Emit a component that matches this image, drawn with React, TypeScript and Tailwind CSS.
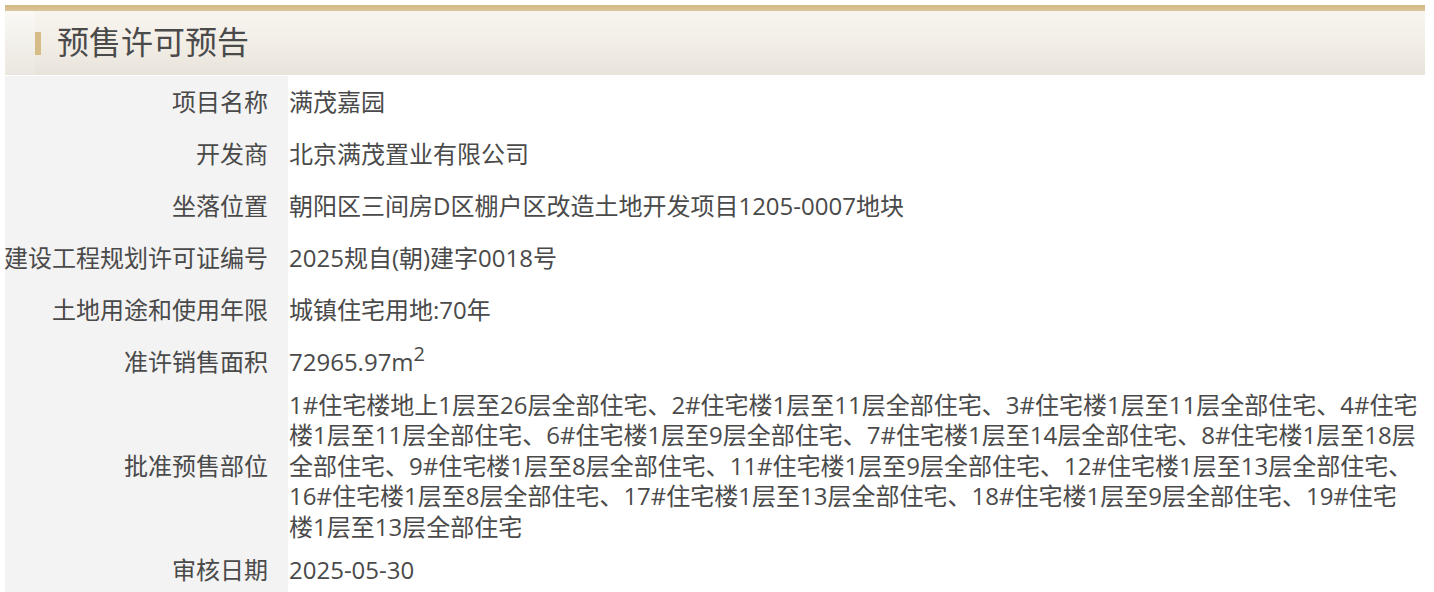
import React from "react";

const rows: { label: string; value: React.ReactNode }[] = [
  { label: "项目名称", value: "满茂嘉园" },
  { label: "开发商", value: "北京满茂置业有限公司" },
  { label: "坐落位置", value: "朝阳区三间房D区棚户区改造土地开发项目1205-0007地块" },
  { label: "建设工程规划许可证编号", value: "2025规自(朝)建字0018号" },
  { label: "土地用途和使用年限", value: "城镇住宅用地:70年" },
  {
    label: "准许销售面积",
    value: (
      <span>
        72965.97m<span className="text-[20px] relative top-[-10px]">2</span>
      </span>
    ),
  },
];

const multiLines = [
  "1#住宅楼地上1层至26层全部住宅、2#住宅楼1层至11层全部住宅、3#住宅楼1层至11层全部住宅、4#住宅",
  "楼1层至11层全部住宅、6#住宅楼1层至9层全部住宅、7#住宅楼1层至14层全部住宅、8#住宅楼1层至18层",
  "全部住宅、9#住宅楼1层至8层全部住宅、11#住宅楼1层至9层全部住宅、12#住宅楼1层至13层全部住宅、",
  "16#住宅楼1层至8层全部住宅、17#住宅楼1层至13层全部住宅、18#住宅楼1层至9层全部住宅、19#住宅",
  "楼1层至13层全部住宅",
];

function Row({ label, children, multi }: { label: string; children: React.ReactNode; multi?: boolean }) {
  return (
    <div className="flex">
      <div className="w-[283px] shrink-0 bg-[#f3f3f3] flex items-center justify-end pr-[20px] whitespace-nowrap">
        {label}
      </div>
      <div
        className={
          multi
            ? "flex-1 pl-[1px] py-[2px] leading-[30.4px]"
            : "flex-1 h-[52px] flex items-center pl-[1px] whitespace-nowrap"
        }
      >
        {children}
      </div>
    </div>
  );
}

export default function App() {
  return (
    <div
      className="w-[1434px] h-[592px] overflow-hidden bg-white text-[#4a4a4a] text-[24px]"
      style={{ fontFamily: '"Open Sans", "Noto Sans CJK SC", sans-serif' }}
    >
      <div className="ml-[5px] w-[1420px] pt-[5px]">
        <div className="h-[6px] bg-gradient-to-b from-[#d2b884] to-[#dcc69a]" />
        <div className="h-[64px] flex bg-gradient-to-b from-[#f8f5ef] via-[#f2eee6] to-[#e8e4dc]">
          <div className="w-[30px] bg-gradient-to-b from-[#fbf9f5] to-[#eae7e0]" />
          <div className="flex items-center pb-[2px]">
            <div className="w-[6px] h-[23px] bg-[#d6bd88] mt-[2px]" />
            <div className="ml-[16px] text-[32px] text-[#4a4a4a] leading-none">预售许可预告</div>
          </div>
        </div>
        <div className="h-[1px]" />
        {rows.map((r) => (
          <Row key={r.label} label={r.label}>
            {r.value}
          </Row>
        ))}
        <Row label="批准预售部位" multi>
          {multiLines.map((l, i) => (
            <div key={i} className="whitespace-nowrap">
              {l}
            </div>
          ))}
        </Row>
        <Row label="审核日期">2025-05-30</Row>
      </div>
    </div>
  );
}
